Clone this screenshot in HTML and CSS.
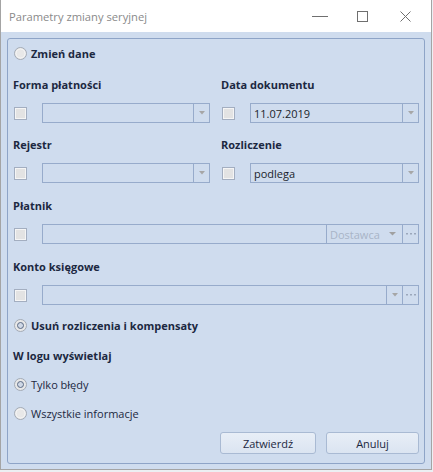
FILE: index.html
```html
<!DOCTYPE html>
<html lang="pl">
<head>
<meta charset="utf-8">
<title>Parametry zmiany seryjnej</title>
<link rel="stylesheet" href="styles.css">
</head>
<body>
<div class="window">
  <div class="titlebar">
    <span class="title">Parametry zmiany seryjnej</span>
    <span class="ctrl"><svg width="16" height="10" viewBox="0 0 16 10"><line x1="0" y1="5.5" x2="16" y2="5.5" stroke="#6f6f6f"/></svg></span>
    <span class="ctrl"><svg width="11" height="11" viewBox="0 0 11 11"><rect x="0.5" y="0.5" width="10" height="10" fill="none" stroke="#6f6f6f"/></svg></span>
    <span class="ctrl"><svg width="11" height="11" viewBox="0 0 11 11"><path d="M0.5 0.5L10.5 10.5M10.5 0.5L0.5 10.5" stroke="#6f6f6f" fill="none"/></svg></span>
  </div>
  <div class="client">
    <div class="group">
      <div class="radio-row">
        <svg class="radio" width="13" height="13" viewBox="0 0 13 13"><circle cx="6.5" cy="6.5" r="6" fill="#e8e8e8" stroke="#a3aab5"/><circle cx="6.5" cy="6.5" r="4.5" fill="none" stroke="#f6f6f6"/></svg>
        <span class="bold">Zmień dane</span>
      </div>

      <div class="pair first">
        <div class="field">
          <div class="lbl">Forma płatności</div>
          <div class="frow">
            <span class="cb"></span>
            <div class="combo"><span class="ctext"></span><span class="cbtn"><svg width="6" height="4" viewBox="0 0 6 4"><path d="M0 0H6L3 3.5Z" fill="#a6a6a6"/></svg></span></div>
          </div>
        </div>
        <div class="field">
          <div class="lbl">Data dokumentu</div>
          <div class="frow">
            <span class="cb"></span>
            <div class="combo"><span class="ctext">11.07.2019</span><span class="cbtn"><svg width="6" height="4" viewBox="0 0 6 4"><path d="M0 0H6L3 3.5Z" fill="#a6a6a6"/></svg></span></div>
          </div>
        </div>
      </div>

      <div class="pair second">
        <div class="field">
          <div class="lbl">Rejestr</div>
          <div class="frow">
            <span class="cb"></span>
            <div class="combo"><span class="ctext"></span><span class="cbtn"><svg width="6" height="4" viewBox="0 0 6 4"><path d="M0 0H6L3 3.5Z" fill="#a6a6a6"/></svg></span></div>
          </div>
        </div>
        <div class="field">
          <div class="lbl">Rozliczenie</div>
          <div class="frow">
            <span class="cb"></span>
            <div class="combo"><span class="ctext">podlega</span><span class="cbtn"><svg width="6" height="4" viewBox="0 0 6 4"><path d="M0 0H6L3 3.5Z" fill="#a6a6a6"/></svg></span></div>
          </div>
        </div>
      </div>

      <div class="field wide">
        <div class="lbl">Płatnik</div>
        <div class="frow">
          <span class="cb"></span>
          <div class="combo">
            <span class="ctext"></span>
            <span class="csel"><span class="muted">Dostawca</span><svg width="7" height="4" viewBox="0 0 7 4"><path d="M0 0H7L3.5 3.5Z" fill="#a0a0a0"/></svg></span>
            <span class="cbtn"><svg width="10" height="2" viewBox="0 0 10 2"><rect x="0" y="0" width="2" height="1.5" fill="#9ba7bb"/><rect x="4" y="0" width="2" height="1.5" fill="#9ba7bb"/><rect x="8" y="0" width="2" height="1.5" fill="#9ba7bb"/></svg></span>
          </div>
        </div>
      </div>

      <div class="field wide">
        <div class="lbl">Konto księgowe</div>
        <div class="frow">
          <span class="cb"></span>
          <div class="combo">
            <span class="ctext"></span>
            <span class="cbtn"><svg width="6" height="4" viewBox="0 0 6 4"><path d="M0 0H6L3 3.5Z" fill="#a6a6a6"/></svg></span>
            <span class="cbtn"><svg width="10" height="2" viewBox="0 0 10 2"><rect x="0" y="0" width="2" height="1.5" fill="#9ba7bb"/><rect x="4" y="0" width="2" height="1.5" fill="#9ba7bb"/><rect x="8" y="0" width="2" height="1.5" fill="#9ba7bb"/></svg></span>
          </div>
        </div>
      </div>

      <div class="radio-row gap10">
        <svg class="radio" width="13" height="13" viewBox="0 0 13 13"><circle cx="6.5" cy="6.5" r="6" fill="#e8e8e8" stroke="#a3aab5"/><circle cx="6.5" cy="6.5" r="3" fill="#cfd8e6" stroke="#5b6a84"/></svg>
        <span class="bold">Usuń rozliczenia i kompensaty</span>
      </div>

      <div class="lbl gap10">W logu wyświetlaj</div>

      <div class="radio-row gap9">
        <svg class="radio" width="13" height="13" viewBox="0 0 13 13"><circle cx="6.5" cy="6.5" r="6" fill="#e8e8e8" stroke="#a3aab5"/><circle cx="6.5" cy="6.5" r="3" fill="#cfd8e6" stroke="#5b6a84"/></svg>
        <span>Tylko błędy</span>
      </div>

      <div class="radio-row gap9">
        <svg class="radio" width="13" height="13" viewBox="0 0 13 13"><circle cx="6.5" cy="6.5" r="6" fill="#e8e8e8" stroke="#a3aab5"/><circle cx="6.5" cy="6.5" r="4.5" fill="none" stroke="#f6f6f6"/></svg>
        <span>Wszystkie informacje</span>
      </div>

      <div class="actions">
        <button class="btn ok">Zatwierdź</button>
        <button class="btn cancel">Anuluj</button>
      </div>
    </div>
  </div>
</div>
</body>
</html>
```

FILE: styles.css
```css
body {
  margin: 0;
  background: #eceff3;
  font-family: "Open Sans", "Noto Sans", sans-serif;
  font-size: 11px;
  color: #1c2841;
}

.window {
  width: 432px;
  height: 470px;
  box-sizing: border-box;
  border: 1px solid #a4a4a4;
  border-top: none;
  background: #cfdcee;
  display: flex;
  flex-direction: column;
}

.titlebar {
  flex: none;
  height: 32px;
  background: #ffffff;
  display: flex;
  align-items: center;
  padding: 0 4px 0 8px;
}

.title {
  flex: 1;
  color: #8a8a8a;
  font-size: 11.2px;
}

.ctrl {
  width: 43px;
  height: 32px;
  display: flex;
  align-items: center;
  justify-content: center;
}

.client {
  flex: 1;
  padding: 6px 6px 5px;
  display: flex;
  flex-direction: column;
}

.group {
  flex: 1;
  border: 1px solid #8ea4c7;
  border-radius: 3px;
  padding: 4px 5px 0;
  display: flex;
  flex-direction: column;
}

.radio-row {
  height: 20px;
  display: flex;
  align-items: center;
  gap: 4px;
  padding-left: 1px;
}

.radio {
  flex: none;
  display: block;
}

.bold {
  font-weight: 700;
}

.lbl {
  height: 20px;
  display: flex;
  align-items: center;
  font-weight: 700;
}

.pair {
  display: grid;
  grid-template-columns: 197px 198px;
  column-gap: 11px;
}

.pair.first {
  margin-top: 11px;
}

.pair.second {
  margin-top: 11px;
}

.field {
  display: flex;
  flex-direction: column;
  gap: 9px;
}

.field.wide {
  margin-top: 12px;
}

.frow {
  height: 20px;
  display: flex;
  align-items: center;
}

.cb {
  flex: none;
  width: 13px;
  height: 13px;
  box-sizing: border-box;
  margin-left: 1px;
  border: 1px solid #a3aec0;
  background: #e3e3e3;
  box-shadow: inset 0 0 0 1px #f5f5f5;
}

.combo {
  flex: 1;
  height: 20px;
  box-sizing: border-box;
  margin-left: 15px;
  border: 1px solid #97abcb;
  display: flex;
}

.ctext {
  flex: 1;
  padding-left: 3px;
  display: flex;
  align-items: center;
  color: #1a1f2b;
}

.cbtn {
  flex: none;
  width: 16px;
  box-sizing: border-box;
  border-left: 1px solid #97abcb;
  display: flex;
  align-items: center;
  justify-content: center;
}

.csel {
  flex: none;
  width: 76px;
  box-sizing: border-box;
  border-left: 1px solid #97abcb;
  padding: 0 6px 0 3px;
  display: flex;
  align-items: center;
  justify-content: space-between;
}

.muted {
  color: #a8b4c7;
}

.gap10 {
  margin-top: 10px;
}

.gap9 {
  margin-top: 9px;
}

.actions {
  margin-top: 9px;
  display: flex;
  justify-content: flex-end;
  gap: 10px;
}

.btn {
  height: 22px;
  box-sizing: border-box;
  border: 1px solid #a9bad3;
  border-radius: 3px;
  background: linear-gradient(#e8eef7, #dbe4f1);
  font: inherit;
  color: #1c2841;
  padding: 0;
}

.btn.ok {
  width: 96px;
}

.btn.cancel {
  width: 93px;
}
```
